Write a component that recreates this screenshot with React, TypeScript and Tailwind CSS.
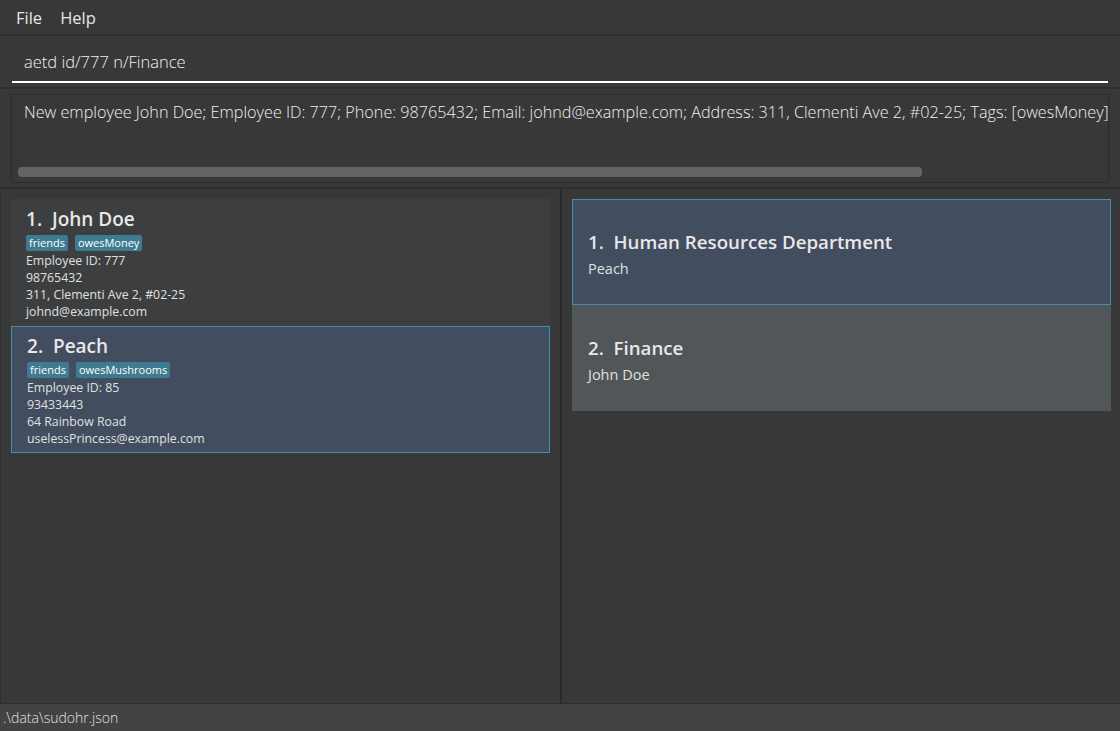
import React from "react";

const font = { fontFamily: '"Open Sans", "Noto Sans", sans-serif' };

function Tag({ t }: { t: string }) {
  return (
    <span className="rounded-[2px] bg-[#3e7b91] px-[3px] text-[11px] leading-[16px] text-white">{t}</span>
  );
}

type P = { idx: number; name: string; tags: string[]; id: string; phone: string; addr: string; email: string; sel?: boolean };

function PersonCard({ p }: { p: P }) {
  return (
    <div
      className={
        "h-[127px] px-[14px] pt-[6px] " +
        (p.sel ? "border border-[#3e8fa8] bg-[#424d5f] pl-[15px]" : "border border-transparent bg-[#3c3e3f]")
      }
    >
      <div className="text-[19px] font-semibold leading-[26px] text-[#e8e8e8]">
        {p.idx}.&nbsp;&nbsp;{p.name}
      </div>
      <div className="mt-[3px] flex gap-[7px]">
        {p.tags.map((t) => (
          <Tag key={t} t={t} />
        ))}
      </div>
      <div className="mt-[1px] text-[12.3px] leading-[17px] text-[#e0e0e0]">
        <div>Employee ID: {p.id}</div>
        <div>{p.phone}</div>
        <div>{p.addr}</div>
        <div>{p.email}</div>
      </div>
    </div>
  );
}

function DeptCard({ idx, name, sub, sel }: { idx: number; name: string; sub: string; sel?: boolean }) {
  return (
    <div
      className={
        "flex h-[106px] flex-col justify-center pl-[15px] pt-[6px] " +
        (sel ? "border border-[#3e8fa8] bg-[#424d5f]" : "border border-transparent bg-[#515658]")
      }
    >
      <div className="text-[18.7px] font-semibold leading-[26px] text-[#e8e8e8]">
        {idx}.&nbsp;&nbsp;{name}
      </div>
      <div className="mt-[2px] text-[14.5px] leading-[24px] text-[#e0e0e0]">{sub}</div>
    </div>
  );
}

export default function App() {
  const people: P[] = [
    { idx: 1, name: "John Doe", tags: ["friends", "owesMoney"], id: "777", phone: "98765432", addr: "311, Clementi Ave 2, #02-25", email: "johnd@example.com" },
    { idx: 2, name: "Peach", tags: ["friends", "owesMushrooms"], id: "85", phone: "93433443", addr: "64 Rainbow Road", email: "uselessPrincess@example.com", sel: true },
  ];
  return (
    <div style={font} className="flex h-[731px] w-[1120px] flex-col overflow-hidden bg-[#383838] text-white">
      {/* menu */}
      <div className="flex h-[36px] shrink-0 items-center gap-[18px] border-b-2 border-[#2e2e2e] pl-[16px] pt-[3px] text-[16.5px] text-[#e6e6e6]">
        <span>File</span>
        <span>Help</span>
      </div>
      {/* command box */}
      <div className="h-[53px] shrink-0 border-b-2 border-[#2e2e2e] px-[12px]">
        <div className="h-[47px] border-b-2 border-white pl-[12px] pt-[14px] text-[16.5px] font-light leading-[24px] text-[#f2f2f2]">
          aetd id/777 n/Finance
        </div>
      </div>
      {/* result display */}
      <div className="h-[100px] shrink-0 border-b-2 border-[#2e2e2e] px-[11px] pt-[5px]">
        <div className="relative h-[89px] overflow-hidden border border-[#2c2c2c] bg-[#383838]">
          <div className="whitespace-nowrap pl-[12px] pt-[5px] text-[16.2px] font-light leading-[24px] text-[#f0f0f0]">
            New employee John Doe; Employee ID: 777; Phone: 98765432; Email: johnd@example.com; Address: 311, Clementi Ave 2, #02-25; Tags: [owesMoney]
          </div>
          <div className="absolute left-[6px] top-[72px] h-[10px] w-[904px] rounded-[4px] bg-[#646464]" />
        </div>
      </div>
      {/* lists */}
      <div className="flex min-h-0 flex-1">
        <div className="w-[560px] border-l border-[#2e2e2e] px-[10px] pt-[10px]">
          {people.map((p) => (
            <PersonCard key={p.idx} p={p} />
          ))}
        </div>
        <div className="w-[2px] bg-[#2a2a2a]" />
        <div className="flex-1 pl-[10px] pr-[9px] pt-[10px]">
          <DeptCard idx={1} name="Human Resources Department" sub="Peach" sel />
          <DeptCard idx={2} name="Finance" sub="John Doe" />
        </div>
      </div>
      {/* status */}
      <div className="flex h-[28px] shrink-0 items-center border-t border-[#2e2e2e] bg-[#434343] pl-[3px] text-[14px] font-light text-[#e0e0e0]">
        .\data\sudohr.json
      </div>
    </div>
  );
}
